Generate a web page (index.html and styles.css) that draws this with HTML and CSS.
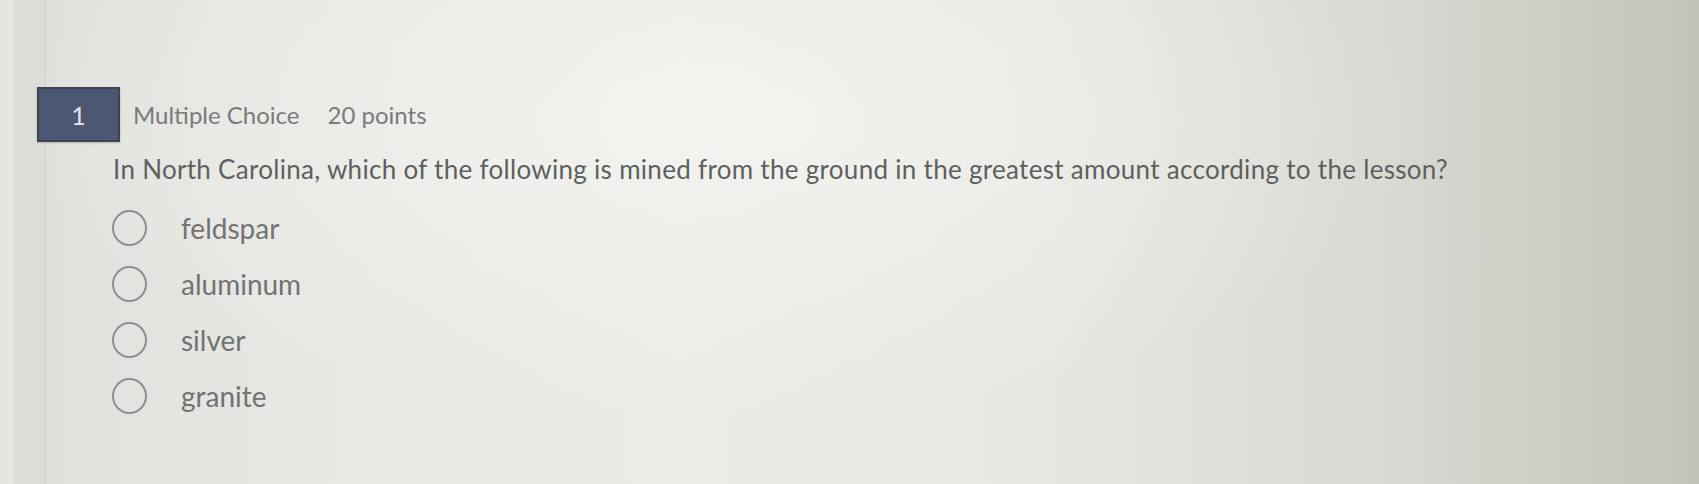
FILE: index.html
```html
<!DOCTYPE html>
<html lang="en">
<head>
<meta charset="utf-8">
<title>Question 1</title>
<link rel="stylesheet" href="styles.css">
</head>
<body>
<div class="page">
  <div class="rail"></div>
  <main class="question">
    <div class="q-header">
      <div class="q-number">1</div>
      <span class="q-type">Multiple Choice</span>
      <span class="q-points">20 points</span>
    </div>
    <p class="q-text">In North Carolina, which of the following is mined from the ground in the greatest amount according to the lesson?</p>
    <ul class="options">
      <li class="option"><span class="radio"></span><span class="label">feldspar</span></li>
      <li class="option"><span class="radio"></span><span class="label">aluminum</span></li>
      <li class="option"><span class="radio"></span><span class="label">silver</span></li>
      <li class="option"><span class="radio"></span><span class="label">granite</span></li>
    </ul>
  </main>
</div>
</body>
</html>
```
FILE: styles.css
```css
html, body {
  margin: 0;
  padding: 0;
  width: 1699px;
  height: 484px;
  overflow: hidden;
}
body {
  font-family: Lato, "Open Sans", sans-serif;
  background:
    radial-gradient(ellipse 700px 300px at 720px 120px, rgba(246,247,243,0.7), rgba(246,247,243,0) 100%),
    linear-gradient(to right, #d9dad5 0%, #e1e2dd 4%, #e6e7e2 15%, #ebece7 40%, #e6e7e1 62%, #d8d9d2 82%, #c2c3bb 100%);
}
.page {
  display: flex;
  height: 484px;
}
.rail {
  width: 44px;
  flex: none;
  border-right: 2px solid rgba(200,201,196,0.6);
  background: linear-gradient(to right, #e5e6e2 0, #e5e6e2 14px, #dcddd8 14px, #dedfda 100%);
}
.question {
  flex: 1;
  padding-top: 87px;
  margin-left: -9px;
}
.q-header {
  display: flex;
  align-items: center;
  height: 55px;
  color: #7a7b7b;
  font-size: 24px;
}
.q-number {
  width: 79px;
  height: 51px;
  background: #4c5773;
  border: 2px solid #40444f;
  color: #dfe5ee;
  font-size: 25px;
  display: flex;
  align-items: center;
  justify-content: center;
  box-shadow: 0 1px 2px rgba(0,0,0,0.2);
}
.q-type {
  margin-left: 13px;
}
.q-points {
  margin-left: 28px;
}
.q-text {
  margin: 10px 0 0 76px;
  color: #5e5f5f;
  font-size: 26px;
  letter-spacing: 0.3px;
  line-height: 34px;
}
.options {
  list-style: none;
  margin: 24px 0 0 75px;
  padding: 0;
  display: flex;
  flex-direction: column;
  gap: 21px;
}
.option {
  display: flex;
  align-items: center;
  height: 35px;
  color: #727373;
  font-size: 28px;
}
.radio {
  width: 31px;
  height: 32px;
  border: 2px solid #8e8f8f;
  border-radius: 50%;
  flex: none;
}
.label {
  margin-left: 34px;
}
```
